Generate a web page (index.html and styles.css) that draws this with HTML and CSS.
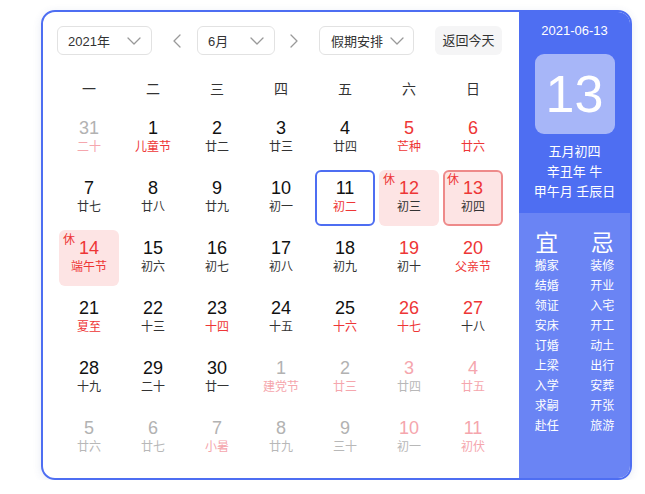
FILE: index.html
```html
<!DOCTYPE html>
<html lang="zh-CN">
<head>
<meta charset="utf-8">
<title>万年历</title>
<link rel="stylesheet" href="styles.css">
</head>
<body>
<div class="cal">
  <div class="main">
    <div class="toolbar">
      <div class="select sel-year"><span>2021年</span><svg class="chev" viewBox="0 0 14 8"><path d="M1 1 L7 7 L13 1"/></svg></div>
      <div class="arrow arrow-prev"><svg viewBox="0 0 8 14"><path d="M7 1 L1 7 L7 13"/></svg></div>
      <div class="select sel-month"><span>6月</span><svg class="chev" viewBox="0 0 14 8"><path d="M1 1 L7 7 L13 1"/></svg></div>
      <div class="arrow arrow-next"><svg viewBox="0 0 8 14"><path d="M1 1 L7 7 L1 13"/></svg></div>
      <div class="select sel-holiday"><span>假期安排</span><svg class="chev" viewBox="0 0 14 8"><path d="M1 1 L7 7 L13 1"/></svg></div>
      <div class="today-btn">返回今天</div>
    </div>
    <div class="week">
      <span>一</span><span>二</span><span>三</span><span>四</span><span>五</span><span>六</span><span>日</span>
    </div>
    <div class="grid">
      <div class="cell"><div class="num n-grey">31</div><div class="lunar l-lred">二十</div></div>
      <div class="cell"><div class="num">1</div><div class="lunar l-red">儿童节</div></div>
      <div class="cell"><div class="num">2</div><div class="lunar">廿二</div></div>
      <div class="cell"><div class="num">3</div><div class="lunar">廿三</div></div>
      <div class="cell"><div class="num">4</div><div class="lunar">廿四</div></div>
      <div class="cell"><div class="num n-red">5</div><div class="lunar l-red">芒种</div></div>
      <div class="cell"><div class="num n-red">6</div><div class="lunar l-red">廿六</div></div>

      <div class="cell"><div class="num">7</div><div class="lunar">廿七</div></div>
      <div class="cell"><div class="num">8</div><div class="lunar">廿八</div></div>
      <div class="cell"><div class="num">9</div><div class="lunar">廿九</div></div>
      <div class="cell"><div class="num">10</div><div class="lunar">初一</div></div>
      <div class="cell selected"><div class="num">11</div><div class="lunar l-red">初二</div></div>
      <div class="cell rest"><span class="tag">休</span><div class="num n-red">12</div><div class="lunar">初三</div></div>
      <div class="cell rest today"><span class="tag">休</span><div class="num n-red">13</div><div class="lunar">初四</div></div>

      <div class="cell rest"><span class="tag">休</span><div class="num n-red">14</div><div class="lunar l-red">端午节</div></div>
      <div class="cell"><div class="num">15</div><div class="lunar">初六</div></div>
      <div class="cell"><div class="num">16</div><div class="lunar">初七</div></div>
      <div class="cell"><div class="num">17</div><div class="lunar">初八</div></div>
      <div class="cell"><div class="num">18</div><div class="lunar">初九</div></div>
      <div class="cell"><div class="num n-red">19</div><div class="lunar">初十</div></div>
      <div class="cell"><div class="num n-red">20</div><div class="lunar l-red">父亲节</div></div>

      <div class="cell"><div class="num">21</div><div class="lunar l-red">夏至</div></div>
      <div class="cell"><div class="num">22</div><div class="lunar">十三</div></div>
      <div class="cell"><div class="num">23</div><div class="lunar l-red">十四</div></div>
      <div class="cell"><div class="num">24</div><div class="lunar">十五</div></div>
      <div class="cell"><div class="num">25</div><div class="lunar l-red">十六</div></div>
      <div class="cell"><div class="num n-red">26</div><div class="lunar l-red">十七</div></div>
      <div class="cell"><div class="num n-red">27</div><div class="lunar">十八</div></div>

      <div class="cell"><div class="num">28</div><div class="lunar">十九</div></div>
      <div class="cell"><div class="num">29</div><div class="lunar">二十</div></div>
      <div class="cell"><div class="num">30</div><div class="lunar">廿一</div></div>
      <div class="cell"><div class="num n-grey">1</div><div class="lunar l-lred">建党节</div></div>
      <div class="cell"><div class="num n-grey">2</div><div class="lunar l-lred">廿三</div></div>
      <div class="cell"><div class="num n-lred">3</div><div class="lunar l-grey">廿四</div></div>
      <div class="cell"><div class="num n-lred">4</div><div class="lunar l-lred">廿五</div></div>

      <div class="cell"><div class="num n-grey">5</div><div class="lunar l-grey">廿六</div></div>
      <div class="cell"><div class="num n-grey">6</div><div class="lunar l-grey">廿七</div></div>
      <div class="cell"><div class="num n-grey">7</div><div class="lunar l-lred">小暑</div></div>
      <div class="cell"><div class="num n-grey">8</div><div class="lunar l-grey">廿九</div></div>
      <div class="cell"><div class="num n-grey">9</div><div class="lunar l-grey">三十</div></div>
      <div class="cell"><div class="num n-lred">10</div><div class="lunar l-grey">初一</div></div>
      <div class="cell"><div class="num n-lred">11</div><div class="lunar l-lred">初伏</div></div>
    </div>
  </div>
  <div class="side">
    <div class="side-top">
      <div class="side-date">2021-06-13</div>
      <div class="side-day">13</div>
      <div class="side-lunar">
        <div>五月初四</div>
        <div>辛丑年 牛</div>
        <div>甲午月 壬辰日</div>
      </div>
    </div>
    <div class="side-bottom">
      <div class="yiji">
        <div class="yj-col">
          <div class="yj-head">宜</div>
          <div>搬家</div><div>结婚</div><div>领证</div><div>安床</div><div>订婚</div><div>上梁</div><div>入学</div><div>求嗣</div><div>赴任</div>
        </div>
        <div class="yj-col">
          <div class="yj-head">忌</div>
          <div>装修</div><div>开业</div><div>入宅</div><div>开工</div><div>动土</div><div>出行</div><div>安葬</div><div>开张</div><div>旅游</div>
        </div>
      </div>
    </div>
  </div>
</div>
</body>
</html>
```
FILE: styles.css
```css
* { box-sizing: border-box; }
html, body { margin: 0; padding: 0; background: #fff; }
body {
  padding: 10px 0 0 41px;
  font-family: "Liberation Sans", "Noto Sans CJK SC", sans-serif;
  color: #222;
}
.cal {
  width: 591px;
  height: 470px;
  border: 2px solid #4e6ef2;
  border-radius: 14px;
  overflow: hidden;
  display: flex;
  box-shadow: 0 2px 8px rgba(60, 80, 160, 0.12);
}
.main {
  width: 476px;
  padding: 14px 0 0 14px;
}
.toolbar {
  display: flex;
  align-items: center;
  height: 29px;
}
.select {
  height: 29px;
  border: 1px solid #e2e2e2;
  border-radius: 6px;
  display: flex;
  align-items: center;
  justify-content: space-between;
  padding: 0 10px 0 10px;
  font-size: 13px;
  color: #333;
  white-space: nowrap;
}
.sel-year { width: 95px; }
.sel-month { width: 78px; }
.sel-holiday { width: 95px; padding: 0 9px 0 11px; }
.chev { width: 14px; height: 8px; flex: none; }
.chev path, .arrow path {
  fill: none;
  stroke: #999;
  stroke-width: 1.3;
  stroke-linecap: round;
  stroke-linejoin: round;
}
.arrow {
  width: 20px;
  height: 29px;
  display: flex;
  align-items: center;
  justify-content: center;
}
.arrow svg { width: 8px; height: 14px; }
.arrow-prev { margin: 0 10px 0 15px; }
.arrow-next { margin: 0 15px 0 9px; }
.today-btn {
  margin-left: 21px;
  width: 67px;
  height: 29px;
  line-height: 29px;
  text-align: center;
  background: #f5f5f6;
  border-radius: 6px;
  font-size: 13px;
  color: #333;
  white-space: nowrap;
}
.week {
  display: grid;
  grid-template-columns: repeat(7, 60px);
  column-gap: 4px;
  margin: 20px 0 0 2px;
  height: 28px;
  line-height: 28px;
  font-size: 14px;
  color: #333;
  text-align: center;
}
.grid {
  display: grid;
  grid-template-columns: repeat(7, 60px);
  grid-auto-rows: 56px;
  gap: 4px;
  margin: 7px 0 0 2px;
}
.cell {
  position: relative;
  border-radius: 6px;
  text-align: center;
  padding-top: 8px;
}
.num {
  font-size: 18px;
  line-height: 20px;
  color: #111;
}
.lunar {
  font-size: 12px;
  line-height: 18px;
  color: #333;
}
.n-red { color: #ee3636; }
.n-grey { color: #b2b2b2; }
.n-lred { color: #f5a6ad; }
.l-red { color: #ee3636; }
.l-grey { color: #b8b8b8; }
.l-lred { color: #f5a6ad; }
.selected { border: 2px solid #4e6ef2; padding-top: 6px; }
.rest { background: #fde4e4; }
.today { border: 2px solid #ee8a8a; padding-top: 6px; }
.tag {
  position: absolute;
  left: 4px;
  top: 3px;
  font-size: 12px;
  line-height: 14px;
  color: #ee3636;
}
.today .tag { left: 2px; top: 1px; }
.side {
  flex: 1;
  display: flex;
  flex-direction: column;
  color: #fff;
}
.side-top {
  background: #4e6ef2;
  height: 201px;
  padding-top: 10px;
  display: flex;
  flex-direction: column;
  align-items: center;
}
.side-date {
  font-size: 13px;
  line-height: 18px;
}
.side-day {
  margin-top: 14px;
  width: 80px;
  height: 80px;
  border-radius: 9px;
  background: #a7b6f8;
  font-size: 52px;
  line-height: 80px;
  text-align: center;
}
.side-lunar {
  margin-top: 8px;
  font-size: 13px;
  line-height: 20px;
  text-align: center;
}
.side-bottom {
  flex: 1;
  background: #6a84f4;
  padding-top: 17px;
}
.yiji {
  display: grid;
  grid-template-columns: 1fr 1fr;
}
.yj-col {
  text-align: center;
  font-size: 12px;
  line-height: 20px;
}
.yj-head {
  font-size: 23px;
  line-height: 26px;
}
```
